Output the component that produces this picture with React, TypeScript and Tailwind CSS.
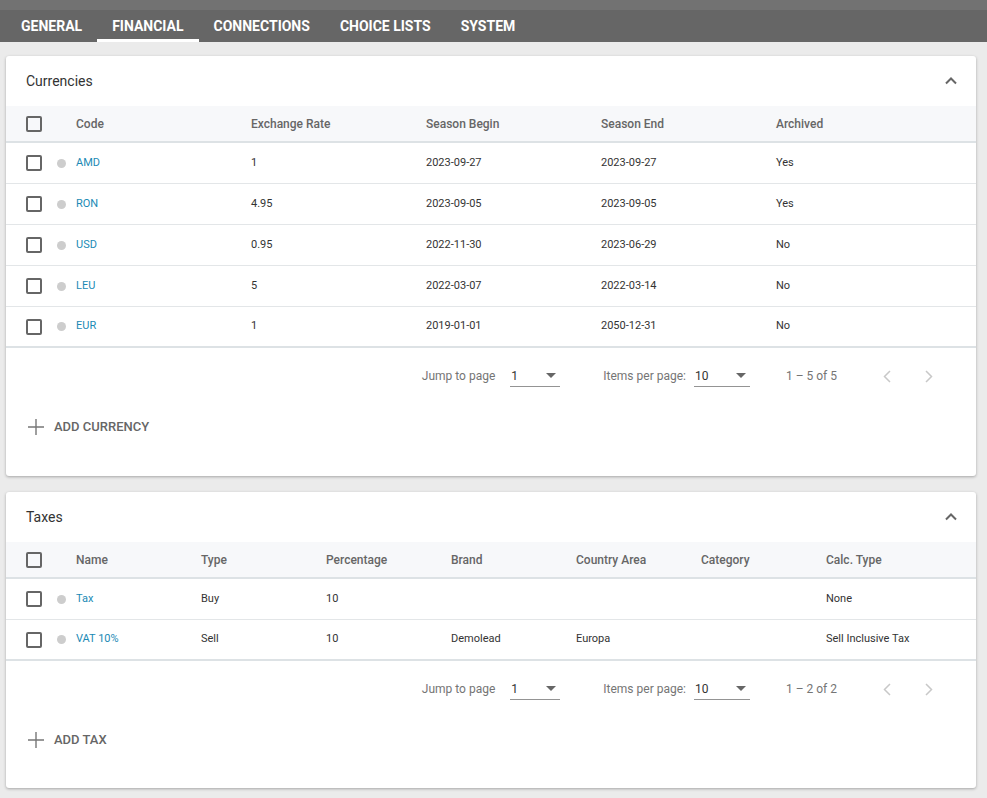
import React from "react";

const tabs = ["GENERAL", "FINANCIAL", "CONNECTIONS", "CHOICE LISTS", "SYSTEM"];

const currencies = [
  { code: "AMD", rate: "1", begin: "2023-09-27", end: "2023-09-27", archived: "Yes" },
  { code: "RON", rate: "4.95", begin: "2023-09-05", end: "2023-09-05", archived: "Yes" },
  { code: "USD", rate: "0.95", begin: "2022-11-30", end: "2023-06-29", archived: "No" },
  { code: "LEU", rate: "5", begin: "2022-03-07", end: "2022-03-14", archived: "No" },
  { code: "EUR", rate: "1", begin: "2019-01-01", end: "2050-12-31", archived: "No" },
];

const taxes = [
  { name: "Tax", type: "Buy", pct: "10", brand: "", area: "", category: "", calc: "None" },
  { name: "VAT 10%", type: "Sell", pct: "10", brand: "Demolead", area: "Europa", category: "", calc: "Sell Inclusive Tax" },
];

function Checkbox() {
  return <div className="w-4 h-4 border-2 border-[#666] rounded-[2px] shrink-0" />;
}

function Caret() {
  return (
    <svg width="10" height="5" viewBox="0 0 10 5" className="shrink-0">
      <path d="M0 0 L10 0 L5 5 Z" fill="#666" />
    </svg>
  );
}

function Select({ value, width }: { value: string; width: string }) {
  return (
    <div className={`${width} h-[22px] flex items-center justify-between border-b border-[#949494] pl-[1px] pr-[4px]`}>
      <span className="text-[12px] text-[#333]">{value}</span>
      <Caret />
    </div>
  );
}

function Paginator({ range }: { range: string }) {
  return (
    <div className="h-[56px] flex items-center justify-end pr-[40px] text-[12px] text-[#757575]">
      <span className="mr-[15px]">Jump to page</span>
      <Select value="1" width="w-[50px]" />
      <span className="ml-[43px] mr-[8px]">Items per page:</span>
      <Select value="10" width="w-[56px]" />
      <span className="ml-[36px]">1 – {range}</span>
      <div className="ml-[43px] flex items-center gap-[26px]">
        <svg width="15" height="15" viewBox="0 0 15 15">
          <path d="M10 2 L4.5 7.5 L10 13" fill="none" stroke="#c8c8c8" strokeWidth="1.5" />
        </svg>
        <svg width="15" height="15" viewBox="0 0 15 15">
          <path d="M5 2 L10.5 7.5 L5 13" fill="none" stroke="#c8c8c8" strokeWidth="1.5" />
        </svg>
      </div>
    </div>
  );
}

function AddButton({ label }: { label: string }) {
  return (
    <div className="h-[46px] pl-[21px] flex items-center">
      <div className="flex items-center gap-[9px] text-[13px] font-medium text-[#666]">
        <svg width="18" height="18" viewBox="0 0 18 18">
          <path d="M9 1 V17 M1 9 H17" stroke="#777" strokeWidth="1.4" />
        </svg>
        {label}
      </div>
    </div>
  );
}

function CardHeader({ title }: { title: string }) {
  return (
    <div className="h-[50px] flex items-center justify-between pl-[20px] pr-[18px]">
      <span className="text-[14px] text-[#333]">{title}</span>
      <svg width="14" height="10" viewBox="0 0 14 10">
        <path d="M2 7.5 L7 2.5 L12 7.5" fill="none" stroke="#666" strokeWidth="2" />
      </svg>
    </div>
  );
}

function Table({ headers, rows, colW }: { headers: string[]; rows: string[][]; colW: string }) {
  return (
    <div>
      <div className="h-[37px] bg-[#f7f8fa] flex items-center border-b-2 border-[#dde2e5] text-[12px] font-medium text-[#666]">
        <div className="w-[70px] pl-[20px] shrink-0">
          <Checkbox />
        </div>
        {headers.map((h) => (
          <div key={h} className={`${colW} shrink-0`}>{h}</div>
        ))}
      </div>
      {rows.map((r, i) => (
        <div
          key={i}
          className={`h-[41px] flex items-center text-[11px] text-[#333] ${i === rows.length - 1 ? "border-b-2 border-[#dde2e5]" : "border-b border-[#e3e6e8]"}`}
        >
          <div className="w-[70px] pl-[20px] shrink-0 flex items-center">
            <Checkbox />
            <div className="ml-[15px] w-[9px] h-[9px] rounded-full bg-[#cdcdcd]" />
          </div>
          {r.map((c, j) => (
            <div key={j} className={`${colW} shrink-0 ${j === 0 ? "text-[#1b8ab5]" : ""}`}>{c}</div>
          ))}
        </div>
      ))}
    </div>
  );
}

export default function App() {
  return (
    <div className="w-[987px] h-[798px] bg-[#ebebeb] overflow-hidden" style={{ fontFamily: "Roboto, 'Liberation Sans', sans-serif" }}>
      <div className="h-[10px] bg-[#727272]" />
      <div className="h-[32px] bg-[#666666] flex items-end pl-[6px]">
        {tabs.map((t) => (
          <div
            key={t}
            className={`h-[32px] px-[15px] flex items-center text-[14px] font-bold text-white ${t === "FINANCIAL" ? "border-b-[3px] border-white pt-[3px]" : ""}`}
          >
            {t}
          </div>
        ))}
      </div>
      <div className="pl-[6px] pr-[11px] pt-[14px] flex flex-col gap-[16px]">
        <div className="bg-white rounded-[3px] shadow-[0_1px_3px_rgba(0,0,0,0.3)] h-[420px]">
          <CardHeader title="Currencies" />
          <Table
            headers={["Code", "Exchange Rate", "Season Begin", "Season End", "Archived"]}
            rows={currencies.map((c) => [c.code, c.rate, c.begin, c.end, c.archived])}
            colW="w-[175px]"
          />
          <Paginator range="5 of 5" />
          <AddButton label="ADD CURRENCY" />
        </div>
        <div className="bg-white rounded-[3px] shadow-[0_1px_3px_rgba(0,0,0,0.3)] h-[296px]">
          <CardHeader title="Taxes" />
          <Table
            headers={["Name", "Type", "Percentage", "Brand", "Country Area", "Category", "Calc. Type"]}
            rows={taxes.map((t) => [t.name, t.type, t.pct, t.brand, t.area, t.category, t.calc])}
            colW="w-[125px]"
          />
          <Paginator range="2 of 2" />
          <AddButton label="ADD TAX" />
        </div>
      </div>
    </div>
  );
}
